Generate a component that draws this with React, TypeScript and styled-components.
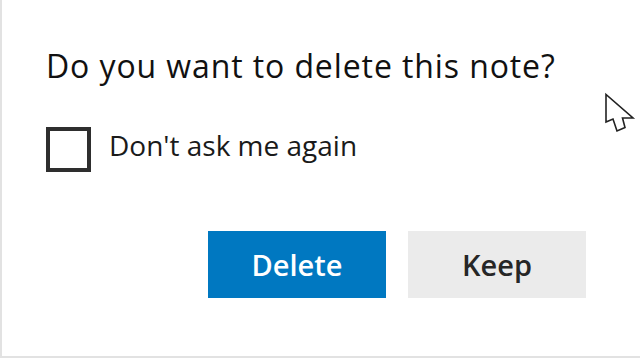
import React from "react";
import styled, { createGlobalStyle } from "styled-components";

const Global = createGlobalStyle`
  html, body { margin: 0; padding: 0; background: #ffffff; }
  body { font-family: "Open Sans", "Noto Sans", sans-serif; }
`;

const Dialog = styled.div`
  position: relative;
  box-sizing: border-box;
  width: 640px;
  height: 358px;
  background: #ffffff;
  border-left: 2px solid #e2e2e2;
  border-bottom: 2px solid #e2e2e2;
  padding: 44px 54px 0 44px;
  display: flex;
  flex-direction: column;
  overflow: hidden;
`;

const Title = styled.h1`
  margin: 0;
  font-family: "Open Sans", sans-serif;
  font-weight: 400;
  font-size: 32px;
  line-height: 44px;
  color: #111111;
  letter-spacing: 0.9px;
  white-space: nowrap;
`;

const CheckRow = styled.label`
  margin-top: 38px;
  display: flex;
  align-items: center;
  gap: 18px;
  cursor: pointer;
`;

const Box = styled.span`
  box-sizing: border-box;
  width: 45px;
  height: 45px;
  border: 4px solid #2e2e2e;
  background: #ffffff;
  flex: none;
`;

const CheckLabel = styled.span`
  font-family: "Open Sans", sans-serif;
  font-size: 28px;
  line-height: 38px;
  padding-bottom: 8px;
  color: #1a1a1a;
  white-space: nowrap;
`;

const ButtonRow = styled.div`
  margin-top: 59px;
  display: flex;
  justify-content: flex-end;
  gap: 22px;
`;

const Button = styled.button<{ $primary?: boolean }>`
  box-sizing: border-box;
  width: 178px;
  height: 67px;
  border: none;
  padding: 0;
  font-family: "Open Sans", sans-serif;
  font-size: 29px;
  font-weight: 600;
  background: ${(p) => (p.$primary ? "#0078c1" : "#ebebeb")};
  color: ${(p) => (p.$primary ? "#ffffff" : "#262626")};
  cursor: pointer;
`;

const Cursor = styled.svg`
  position: absolute;
  left: 601px;
  top: 92px;
`;

export default function App() {
  return (
    <>
      <Global />
      <Dialog>
        <Title>Do you want to delete this note?</Title>
        <CheckRow>
          <Box />
          <CheckLabel>Don't ask me again</CheckLabel>
        </CheckRow>
        <ButtonRow>
          <Button $primary>Delete</Button>
          <Button>Keep</Button>
        </ButtonRow>
        <Cursor width="34" height="42" viewBox="0 0 34 42">
          <path
            d="M3 2.5 L3 30 L10 27 L14 39 L22 35.5 L19.5 26 L30 26 Z"
            fill="#ffffff"
            stroke="#222222"
            strokeWidth="1.6"
            strokeLinejoin="miter"
          />
        </Cursor>
      </Dialog>
    </>
  );
}
